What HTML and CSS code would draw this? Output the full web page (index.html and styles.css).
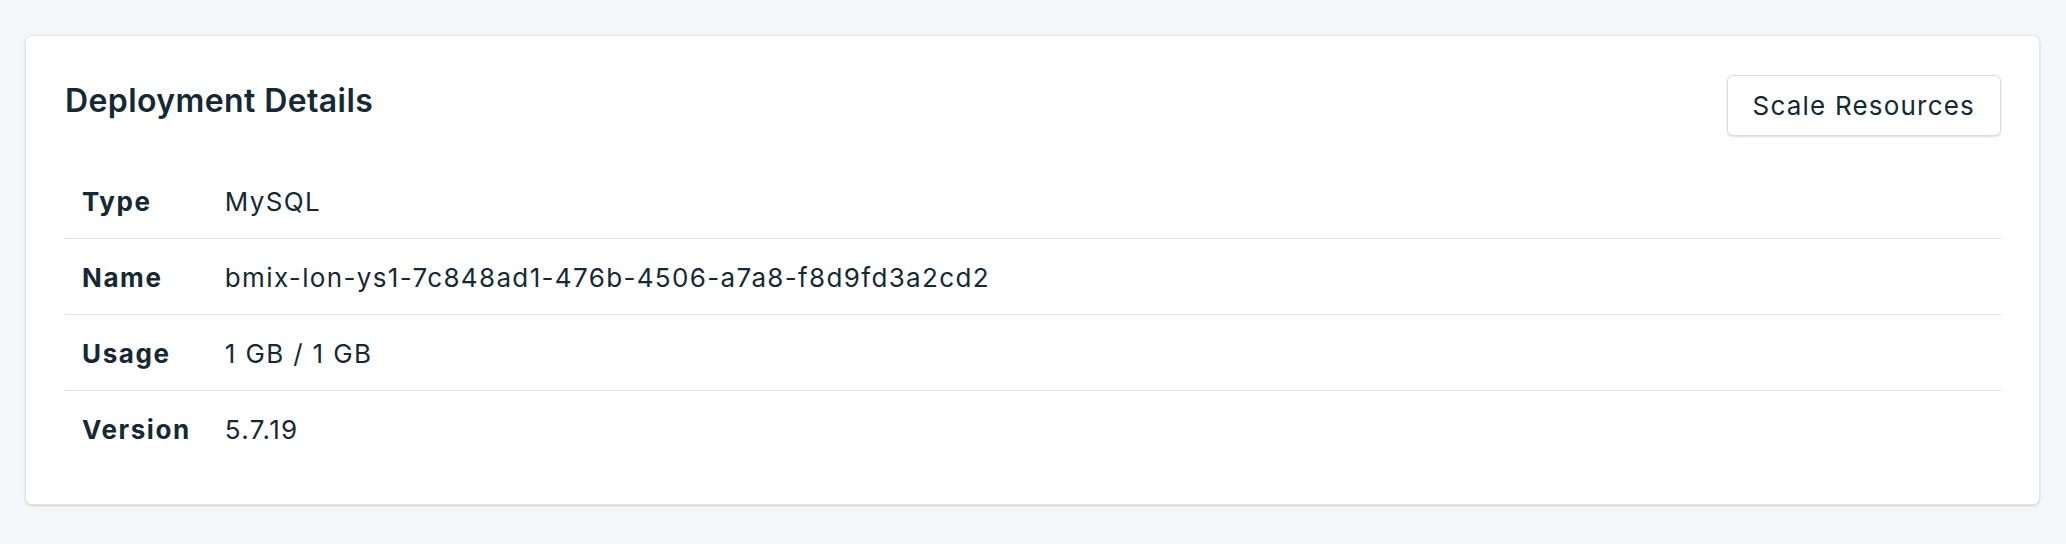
FILE: index.html
```html
<!DOCTYPE html>
<html lang="en">
<head>
<meta charset="utf-8">
<title>Deployment Details</title>
<link rel="stylesheet" href="styles.css">
</head>
<body>
<main class="page">
  <section class="card">
    <header class="card-header">
      <h2 class="card-title">Deployment Details</h2>
      <button class="btn" type="button">Scale Resources</button>
    </header>
    <table class="details">
      <tbody>
        <tr><th>Type</th><td>MySQL</td></tr>
        <tr><th>Name</th><td>bmix-lon-ys1-7c848ad1-476b-4506-a7a8-f8d9fd3a2cd2</td></tr>
        <tr><th>Usage</th><td>1 GB / 1 GB</td></tr>
        <tr><th>Version</th><td>5.7.19</td></tr>
      </tbody>
    </table>
  </section>
</main>
</body>
</html>
```

FILE: styles.css
```css
html, body {
  margin: 0;
  padding: 0;
}

body {
  background: #f5f6f9;
  font-family: Inter, "Noto Sans", "Liberation Sans", sans-serif;
  color: #152935;
  font-size: 26px;
}

.page {
  padding: 35px 26px 38px 25px;
}

.card {
  background: #ffffff;
  border: 1px solid #e3e5e9;
  border-radius: 7px;
  box-shadow: 0 1px 2px rgba(21, 41, 53, 0.18);
  padding: 39px 38px 38px 39px;
}

.card-header {
  display: flex;
  justify-content: space-between;
  align-items: flex-start;
  margin-bottom: 27px;
}

.card-title {
  margin: 6px 0 0;
  font-size: 32px;
  font-weight: 600;
  line-height: 40px;
  letter-spacing: 0.4px;
}

.btn {
  height: 61px;
  padding: 0 25px 0 25px;
  background: #ffffff;
  border: 1px solid #d8dce1;
  border-radius: 6px;
  box-shadow: 0 1px 2px rgba(21, 41, 53, 0.16);
  font-family: inherit;
  font-size: 26px;
  font-weight: 400;
  color: #152935;
  line-height: 32px;
  letter-spacing: 1.2px;
}

.details {
  width: 100%;
  border-collapse: collapse;
}

.details th,
.details td {
  padding: 23px 17px 20px;
  line-height: 32px;
  text-align: left;
  vertical-align: middle;
  letter-spacing: 1.35px;
}

.details th {
  width: 1%;
  white-space: nowrap;
  font-weight: 700;
  letter-spacing: 1.6px;
}

.details td {
  font-weight: 400;
}

.details tr + tr th,
.details tr + tr td {
  border-top: 1px solid #dde1e5;
}
```
